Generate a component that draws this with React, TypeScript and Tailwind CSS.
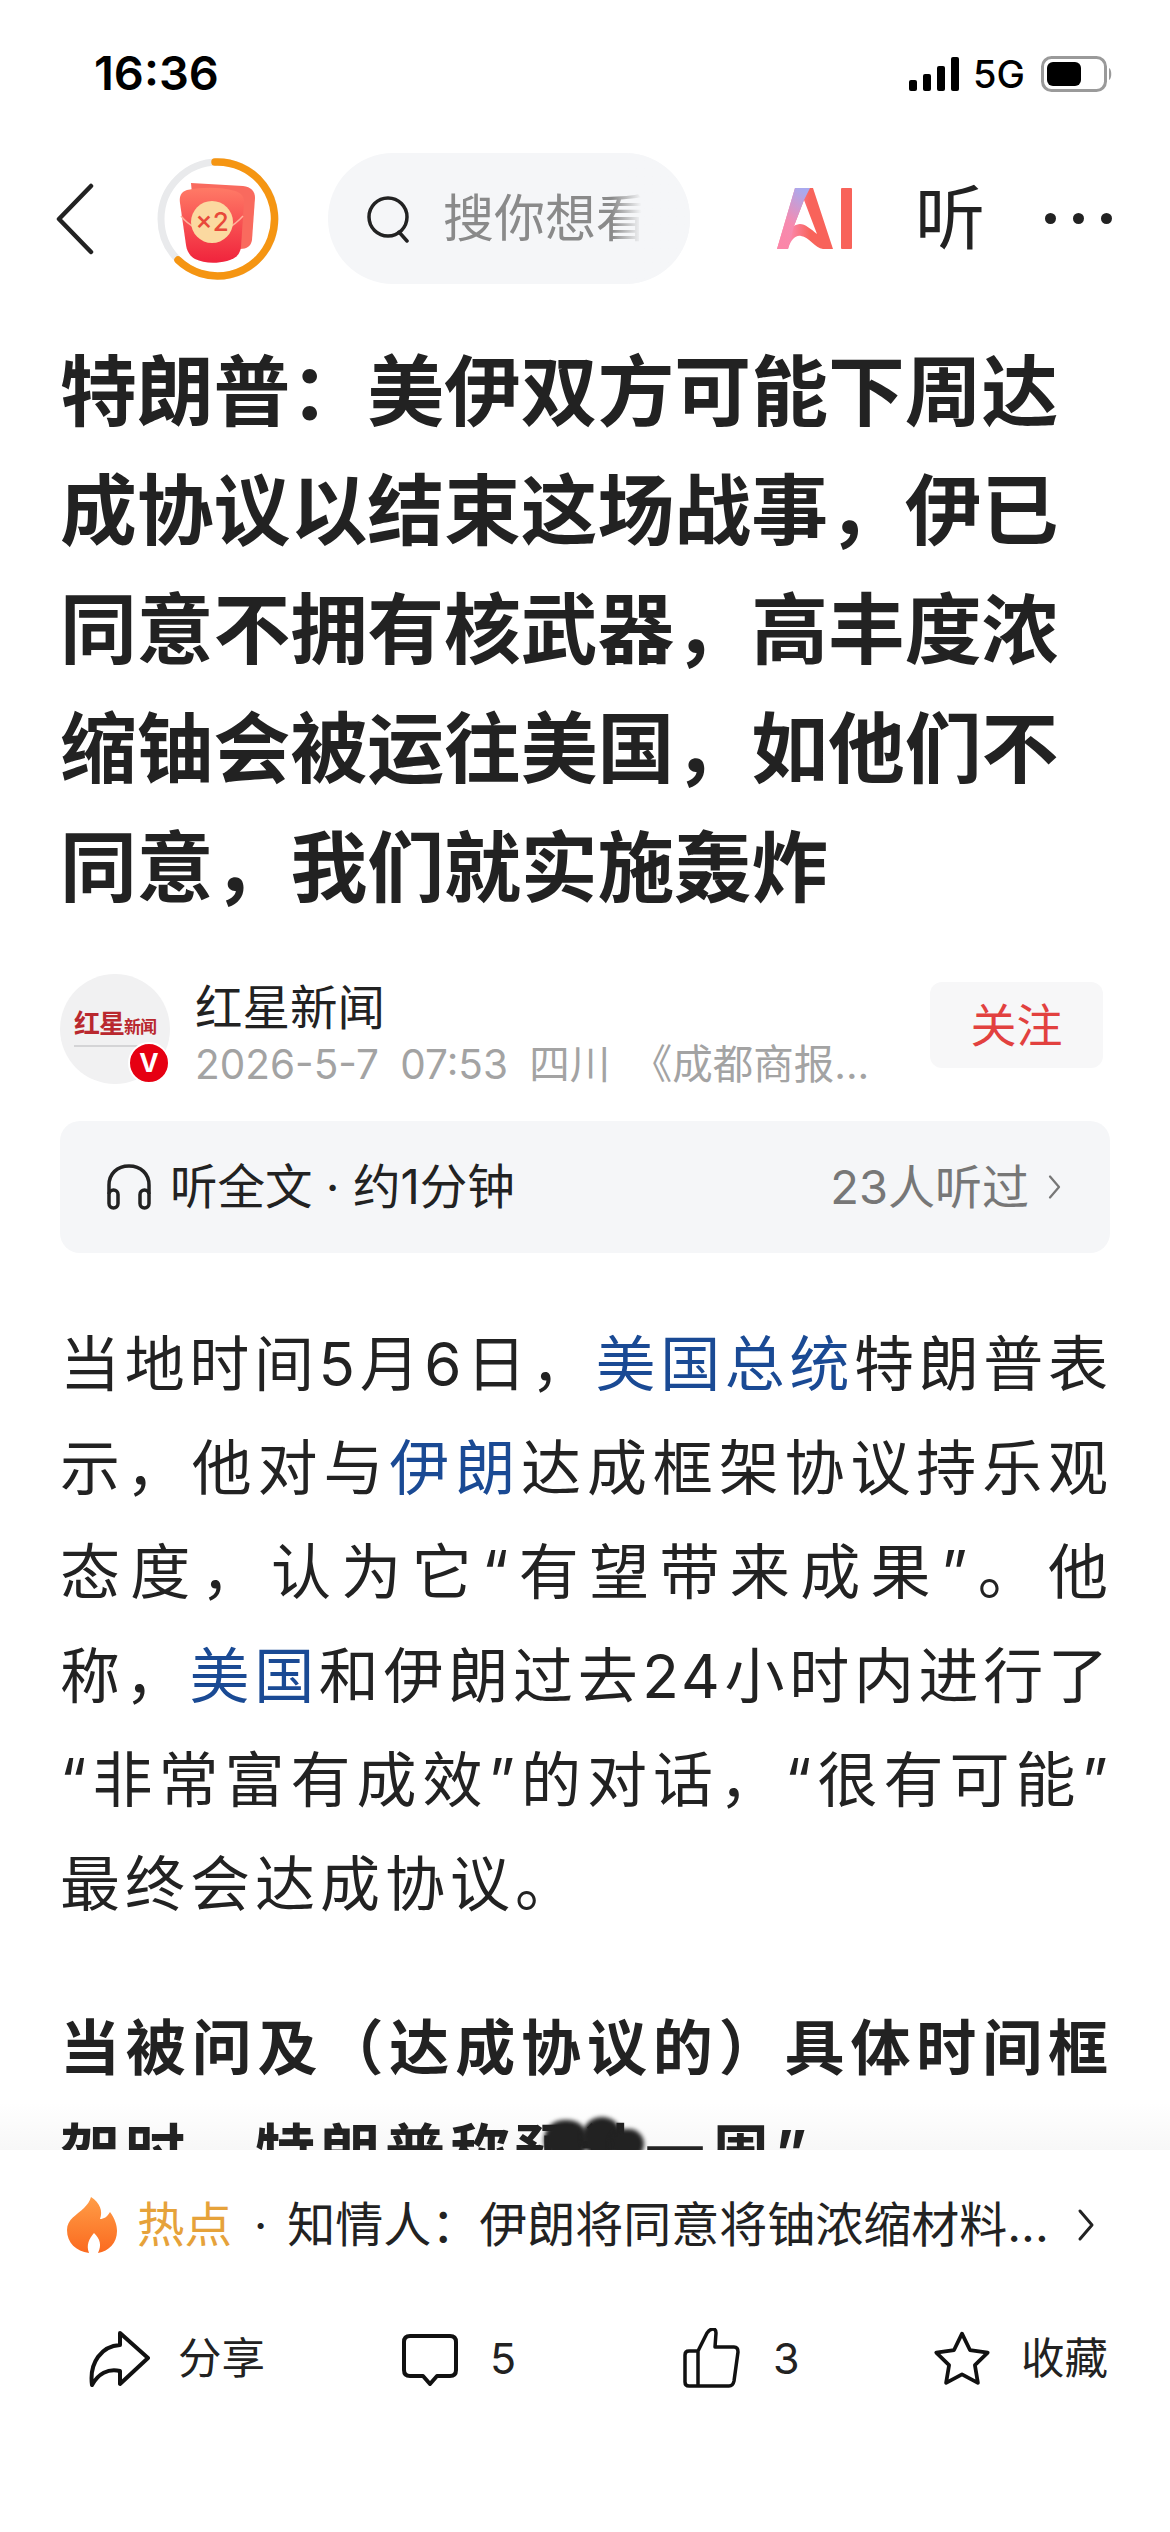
const cjk = "font-['Inter','Noto_Sans_CJK_SC',sans-serif]";

const Chevron = ({ className }: { className: string }) => (
    <svg viewBox="0 0 20 34" fill="none" className={className}>
        <path d="M4 3l12 14L4 31" stroke="currentColor" strokeWidth="3" strokeLinecap="round" strokeLinejoin="round" />
    </svg>
);

const StatusBar = () => (
    <div className="h-[153px] pt-[50px] pl-[94px] pr-[57px] flex items-start justify-between text-black">
        <span className="text-[47px] leading-[46px] font-semibold font-['Inter',sans-serif]">16:36</span>
        <div className="flex items-center pt-[6px]">
            <svg width="50" height="34" viewBox="0 0 50 34" fill="#000">
                <rect x="0" y="23" width="8" height="11" rx="2" />
                <rect x="14" y="17" width="8" height="17" rx="2" />
                <rect x="28" y="9" width="8" height="25" rx="2" />
                <rect x="42" y="0" width="8" height="34" rx="2" />
            </svg>
            <span className="ml-[14px] text-[38px] leading-[36px] font-medium font-['Inter',sans-serif]">5G</span>
            <svg width="72" height="36" viewBox="0 0 72 36" fill="none" className="ml-[16px]">
                <rect x="1.500" y="1.500" width="63" height="33" rx="9" stroke="#9a9a9a" strokeWidth="3" />
                <rect x="6" y="6" width="34" height="24" rx="6" fill="#000" />
                <path d="M68 12c3 1 3 11 0 12z" fill="#9a9a9a" />
            </svg>
        </div>
    </div>
);

const RedPacket = () => (
    <svg width="122" height="122" viewBox="0 0 122 122" fill="none" className="shrink-0">
        <defs>
            <linearGradient id="packet" x1="0" y1="0" x2="0" y2="1">
                <stop offset="0" stopColor="#ff7a66" />
                <stop offset="1" stopColor="#f0233c" />
            </linearGradient>
        </defs>
        <circle cx="61" cy="61" r="57" stroke="#e9eaec" strokeWidth="7" />
        <path d="M58 4A57 57 0 1 1 21 102" stroke="#f59512" strokeWidth="7.500" strokeLinecap="round" />
        <path d="M34 25l52 3c8 1 12 5 12 12l-3 42c-1 6-5 9-12 9H40z" fill="#f96a5e" />
        <path d="M30 32c17-3 33-3 48 1 6 2 9 5 9 11l-3 45c-1 8-6 12-14 14-12 3-24 2-32-2-5-3-8-7-9-14l-6-42c-1-7 1-11 7-13z" fill="url(#packet)" />
        <path d="M24 58c8 10 20 16 31 16s22-6 31-16" stroke="#ffb09a" strokeWidth="1.500" />
        <circle cx="55" cy="64" r="21" fill="#fbd9a0" />
        <text x="55" y="73" textAnchor="middle" fontSize="26" fontWeight="500" fill="#e8493a" fontFamily="Inter, sans-serif">×2</text>
    </svg>
);

const AiLogo = () => (
    <svg width="76" height="62" viewBox="0 0 76 62" className="shrink-0">
        <defs>
            <linearGradient id="aiBody" x1="0" y1="0" x2="1" y2="0">
                <stop offset="0.25" stopColor="#fb86a8" />
                <stop offset="0.6" stopColor="#f8635a" />
            </linearGradient>
            <linearGradient id="aiLeft" x1="0.7" y1="0" x2="0.3" y2="1">
                <stop offset="0" stopColor="#a9a9ee" />
                <stop offset="0.6" stopColor="#f58bb0" />
                <stop offset="1" stopColor="#fb86a8" />
            </linearGradient>
        </defs>
        <path fillRule="evenodd" d="M18 0H36L56 61H46C38 60 32 49 24 48C18 47 14 52 11 61H0ZM27 12L40 46C34 41 28 36 23 36C21 36 18 37 17 38Z" fill="url(#aiBody)" />
        <path d="M18 0H33L27 12L17 38L11 61H0Z" fill="url(#aiLeft)" />
        <rect x="64" y="0" width="11" height="61" rx="1" fill="#f8635a" />
    </svg>
);

const NavBar = () => (
    <div className="h-[131px] pl-[56px] flex items-center">
        <svg width="38" height="72" viewBox="0 0 38 72" fill="none" className="shrink-0">
            <path d="M35 3L3 36L35 69" stroke="#222" strokeWidth="4.500" strokeLinecap="round" strokeLinejoin="round" />
        </svg>
        <div className="ml-[63px]">
            <RedPacket />
        </div>
        <div className="ml-[49px] w-[362px] h-[131px] rounded-[65px] bg-[#f5f6f8] flex items-center pl-[38px] relative overflow-hidden shrink-0">
            <svg width="46" height="48" viewBox="0 0 46 48" fill="none" className="shrink-0">
                <circle cx="22" cy="22" r="19" stroke="#222" strokeWidth="3.500" />
                <path d="M33 37l8 9" stroke="#222" strokeWidth="3.500" strokeLinecap="round" />
            </svg>
            <span className={`ml-[31px] text-[51px] leading-[60px] text-[#8a8a8a] whitespace-nowrap ${cjk}`}>搜你想看</span>
            <div className="absolute right-0 top-0 bottom-0 w-[78px] bg-gradient-to-r from-[#f5f6f8]/0 to-[#f5f6f8] to-[38%]" />
        </div>
        <div className="ml-[87px]">
            <AiLogo />
        </div>
        <span className={`ml-[62px] text-[70px] leading-[80px] text-[#222] ${cjk}`}>听</span>
        <div className="ml-[60px] flex gap-[17px]">
            <span className="w-[11px] h-[11px] rounded-full bg-[#222]" />
            <span className="w-[11px] h-[11px] rounded-full bg-[#222]" />
            <span className="w-[11px] h-[11px] rounded-full bg-[#222]" />
        </div>
    </div>
);

const Author = () => (
    <div className="mt-[46px] ml-[60px] mr-[67px] flex items-start">
        <div className="w-[110px] h-[110px] rounded-full bg-[#f1f1f2] relative shrink-0 flex flex-col items-center justify-center">
            <span className="text-[26px] leading-[30px] text-[#b9282e] whitespace-nowrap -mt-[4px] font-['Noto_Sans_CJK_SC',serif] font-bold tracking-[-1px]">红星<span className="text-[17px]">新闻</span></span>
            <span className="w-[72px] h-[2px] mt-[4px] mr-[10px] bg-[#d4d4d6]" />
            <span className="absolute right-0 bottom-0 w-[42px] h-[42px] rounded-full bg-[#e60012] border-[2px] border-white flex items-center justify-center text-white text-[26px] leading-none font-bold font-['Inter',sans-serif]">V</span>
        </div>
        <div className="ml-[25px] flex-1 min-w-0">
            <div className={`text-[47.500px] leading-[58px] text-[#222] mt-[5px] ${cjk}`}>红星新闻</div>
            <div className={`text-[40.500px] leading-[46px] text-[#a3a3a3] mt-[5px] whitespace-nowrap [word-spacing:10px] ${cjk}`}>2026-5-7 07:53 四川 《成都商报...</div>
        </div>
        <div className={`w-[173px] h-[86px] mt-[8px] rounded-[12px] bg-[#f7f7f8] flex items-center justify-center text-[46px] text-[#e2413f] shrink-0 ${cjk}`}>关注</div>
    </div>
);

const ListenBar = () => (
    <div className="mt-[33px] mx-[60px] h-[132px] rounded-[20px] bg-[#f5f6f8] flex items-center justify-between pl-[46px] pr-[48px]">
        <div className="flex items-center gap-[18px]">
            <svg width="46" height="46" viewBox="0 0 46 46" fill="none">
                <path d="M3 30V21C3 10 11 2 23 2s20 8 20 19v9" stroke="#222" strokeWidth="3.500" />
                <rect x="3" y="26" width="9" height="18" rx="4.500" stroke="#222" strokeWidth="3.500" />
                <rect x="34" y="26" width="9" height="18" rx="4.500" stroke="#222" strokeWidth="3.500" />
            </svg>
            <span className={`text-[47.500px] leading-[56px] text-[#222] whitespace-nowrap ${cjk}`}>听全文 · 约1分钟</span>
        </div>
        <div className="flex items-center gap-[18px]">
            <span className={`text-[47px] leading-[56px] text-[#777] whitespace-nowrap ${cjk}`}>23人听过</span>
            <Chevron className="w-[15px] h-[30px] text-[#777]" />
        </div>
    </div>
);

const Link = ({ children }: { children: string }) => <span className="text-[#1a4a94]">{children}</span>;

// each line is its own block so the breaks land where the reference has them
const Line = ({ children }: { children: React.ReactNode }) => (
    <div className="text-justify [text-align-last:justify]">{children}</div>
);

const Article = () => (
    <div className="flex-1 min-h-0 overflow-hidden relative">
        <div className="absolute left-0 right-0 bottom-0 h-[47px] bg-gradient-to-b from-white to-[#f7f7f7]" />
        <h1 className={`mt-[49px] pl-[60px] pr-[50px] text-[76.800px] leading-[119px] font-bold text-[#222] ${cjk}`}>
            特朗普：美伊双方可能下周达成协议以结束这场战事，伊已同意不拥有核武器，高丰度浓缩铀会被运往美国，如他们不同意，我们就实施轰炸
        </h1>
        <Author />
        <ListenBar />
        <div className={`mt-[59px] pl-[60px] pr-[59px] text-[60px] leading-[104px] tracking-[3px] text-[#222] ${cjk}`}>
            <Line>当地时间5月6日，<Link>美国总统</Link>特朗普表</Line>
            <Line>示，他对与<Link>伊朗</Link>达成框架协议持乐观</Line>
            <Line>态度，认为它“有望带来成果”。他</Line>
            <Line>称，<Link>美国</Link>和伊朗过去24小时内进行了</Line>
            <Line>“非常富有成效”的对话，“很有可能”</Line>
            <div className="tracking-[5px]">最终会达成协议。</div>
        </div>
        <div className={`relative mt-[60px] pl-[60px] pr-[59px] text-[60px] leading-[104px] tracking-[3px] font-bold text-[#222] ${cjk}`}>
            <Line>当被问及（达成协议的）具体时间框</Line>
            <div className="tracking-[5px]">架时，特朗普称预计一周”</div>
        </div>
        <div className="absolute left-[544px] top-[1836px] w-[44px] h-[40px] rounded-full bg-[#222] blur-[2px]" />
        <div className="absolute left-[582px] top-[1833px] w-[40px] h-[40px] rounded-full bg-[#222] blur-[2px]" />
        <div className="absolute left-[610px] top-[1845px] w-[34px] h-[30px] rounded-full bg-[#222] blur-[2px]" />
    </div>
);

const HotRow = () => (
    <div className="h-[150px] pl-[67px] pr-[74px] flex items-center">
        <svg width="50" height="56" viewBox="0 0 50 56" className="shrink-0">
            <defs>
                <linearGradient id="flame" x1="0" y1="0" x2="0" y2="1">
                    <stop offset="0" stopColor="#ff9d47" />
                    <stop offset="1" stopColor="#fb6a1f" />
                </linearGradient>
            </defs>
            <path d="M24 0C33 6 36 14 33 22C37 22 40 20 43 15C48 22 50 28 50 34C50 46 42 54 31 56C35 48 33 42 27 36C22 42 19 48 22 56C9 54 0 46 0 33C0 22 10 18 17 11C20 8 23 4 24 0Z" fill="url(#flame)" />
        </svg>
        <span className={`ml-[20px] text-[47.500px] leading-[56px] text-[#e6a23a] whitespace-nowrap ${cjk}`}>热点</span>
        <span className={`ml-[22px] text-[46px] leading-[56px] text-[#222] whitespace-nowrap ${cjk}`}>·</span>
        <span className={`ml-[20px] flex-1 text-[48px] leading-[56px] text-[#222] whitespace-nowrap ${cjk}`}>知情人：伊朗将同意将铀浓缩材料...</span>
        <Chevron className="w-[20px] h-[36px] text-[#222] shrink-0" />
    </div>
);

const ActionBar = () => (
    <div className="pl-[88px] pt-[28px] h-[88px] flex items-center">
        <svg width="62" height="57" viewBox="0 0 62 57" fill="none" className="shrink-0">
            <path d="M32 3L60 28L32 54V41C20 38 10 44 4 55C1 32 14 16 32 15Z" stroke="#111" strokeWidth="4" strokeLinejoin="round" />
        </svg>
        <span className={`ml-[28px] w-[88px] text-[43.500px] leading-[52px] text-[#222] whitespace-nowrap ${cjk}`}>分享</span>
        <svg width="56" height="52" viewBox="0 0 56 52" fill="none" className="ml-[136px] shrink-0 mt-[4px]">
            <path d="M8 2h40c4 0 6 2 6 6v28c0 4-2 6-6 6H35l-7 8-7-8H8c-4 0-6-2-6-6V8c0-4 2-6 6-6z" stroke="#111" strokeWidth="4" strokeLinejoin="round" />
        </svg>
        <span className="ml-[32px] w-[24px] text-[43px] leading-[52px] text-[#222] font-['Inter',sans-serif]">5</span>
        <svg width="57" height="60" viewBox="0 0 57 60" fill="none" className="ml-[169px] shrink-0">
            <path d="M2 27Q2 23 6 23H15L24 5Q27 1 30 1Q33 1 33 5L32 19H51Q55 19 55 24L51 53Q50 58 46 58H6Q2 58 2 54ZM15 23V58" stroke="#111" strokeWidth="3.500" strokeLinejoin="round" />
        </svg>
        <span className="ml-[33px] w-[25px] text-[43px] leading-[52px] text-[#222] font-['Inter',sans-serif]">3</span>
        <svg width="58" height="56" viewBox="0 0 62 58" fill="none" className="ml-[135px] shrink-0">
            <path d="M31 3l8.500 17.500 19 2.700-13.700 13.400 3.200 19L31 46.600 14 55.600l3.200-19L3.500 23.200l19-2.700z" stroke="#111" strokeWidth="4" strokeLinejoin="round" />
        </svg>
        <span className={`ml-[30px] w-[88px] text-[43.500px] leading-[52px] text-[#222] whitespace-nowrap ${cjk}`}>收藏</span>
    </div>
);

const App = () => {
    return (
        <div className="w-[1170px] h-[2532px] bg-white flex flex-col overflow-hidden">
            <StatusBar />
            <NavBar />
            <Article />
            <div className="h-[382px] shrink-0 bg-white">
                <HotRow />
                <ActionBar />
            </div>
        </div>
    );
};

export default App;
